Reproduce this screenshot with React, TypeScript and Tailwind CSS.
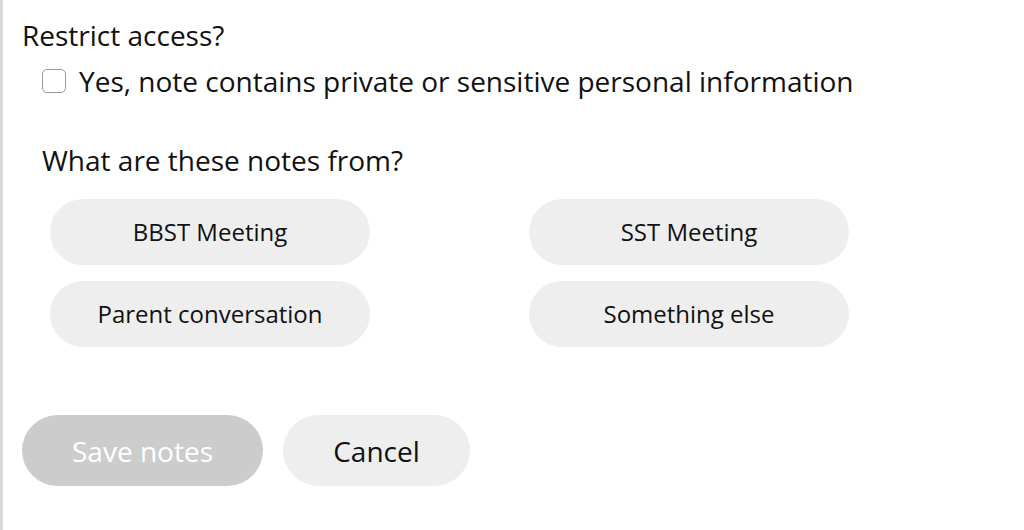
import React from "react";

const font = { fontFamily: '"Open Sans", "Noto Sans", sans-serif' };

export default function App() {
  const options = ["BBST Meeting", "SST Meeting", "Parent conversation", "Something else"];
  return (
    <div
      className="w-[1024px] h-[530px] bg-white border-l-[3px] border-[#d9d9d9] pl-[19px] pt-[16px] text-[#111] font-['Open_Sans',sans-serif] overflow-hidden"
      style={font}
    >
      <div className="text-[28px] leading-[38px]">Restrict access?</div>
      <label className="flex items-center gap-[13px] ml-[20px] mt-[8px]">
        <span className="w-[24px] h-[24px] rounded-[5px] border border-[#9a9a9a] bg-white shrink-0" />
        <span className="text-[28px] leading-[38px]">
          Yes, note contains private or sensitive personal information
        </span>
      </label>
      <div className="ml-[20px] mt-[41px] text-[28px] leading-[38px]">What are these notes from?</div>
      <div className="ml-[28px] mt-[20px] grid grid-cols-[320px_320px] gap-x-[159px] gap-y-[16px]">
        {options.map((o) => (
          <button
            key={o}
            className="h-[66px] rounded-full bg-[#eeeeee] text-[24px] text-[#111] flex items-center justify-center"
          >
            {o}
          </button>
        ))}
      </div>
      <div className="flex gap-[20px] mt-[68px]">
        <button className="w-[241px] h-[71px] rounded-full bg-[#cccccc] text-white text-[28px] flex items-center justify-center">
          Save notes
        </button>
        <button className="w-[187px] h-[71px] rounded-full bg-[#eeeeee] text-[#111] text-[28px] flex items-center justify-center">
          Cancel
        </button>
      </div>
    </div>
  );
}
